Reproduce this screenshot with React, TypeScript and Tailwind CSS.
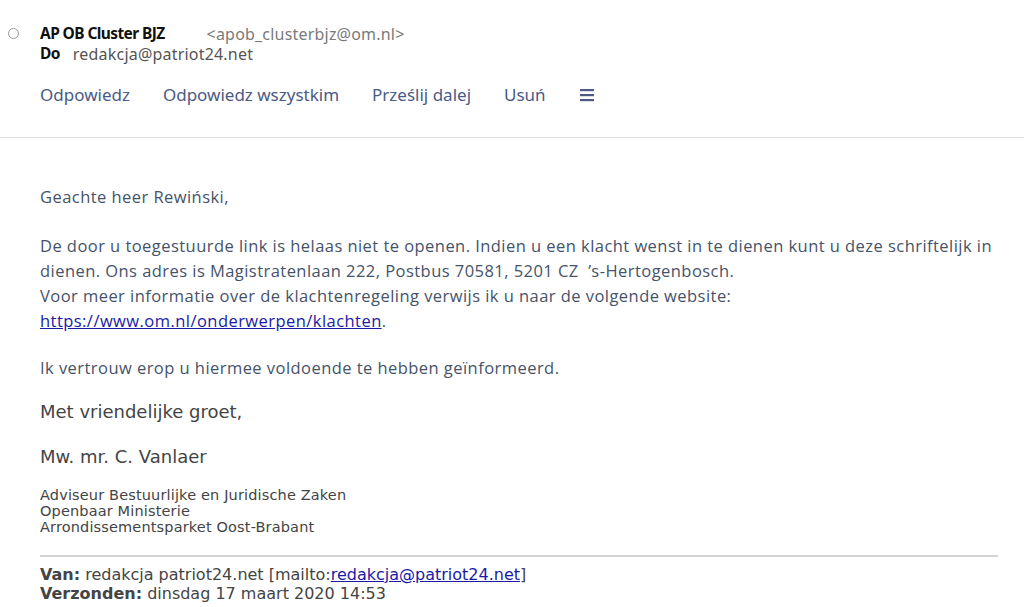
import React from 'react';

const body = "font-['Open_Sans',sans-serif] text-[16.5px] tracking-[0.45px] text-[#45536a] leading-[25px] whitespace-nowrap";
const sig = "font-['DejaVu_Sans',sans-serif] text-[#444]";

export default function App() {
  return (
    <div className="w-[1024px] h-[607px] bg-white overflow-hidden">
      <header className="border-b border-[#e3e3e3] pt-[23px] pb-[29px] font-['Noto_Sans',sans-serif]">
        <div className="flex items-center h-[21px]">
          <span className="ml-[8px] w-[11px] h-[11px] rounded-full border border-[#9a9a9a]" />
          <span className="ml-[21px] text-[15.5px] tracking-[-0.6px] font-bold text-[#111]">AP OB Cluster BJZ</span>
          <span className="ml-[42px] text-[16px] tracking-[0.2px] text-[#7a7a7a]">&lt;apob_clusterbjz@om.nl&gt;</span>
        </div>
        <div className="flex items-center h-[20px] pl-[40px]">
          <span className="text-[15.5px] tracking-[-0.6px] font-bold text-[#111]">Do</span>
          <span className="ml-[13px] text-[16px] tracking-[0.2px] text-[#555]">redakcja@patriot24.net</span>
        </div>
        <nav className="flex items-center gap-[33px] pl-[40px] mt-[18px] text-[17px] text-[#4b5a86]">
          <span>Odpowiedz</span>
          <span>Odpowiedz wszystkim</span>
          <span>Prześlij dalej</span>
          <span>Usuń</span>
          <svg width="16" height="14" viewBox="0 0 16 14">
            <rect x="1" y="1" width="14" height="2.2" fill="#4b5a86" />
            <rect x="1" y="6" width="14" height="2.2" fill="#4b5a86" />
            <rect x="1" y="11" width="14" height="2.2" fill="#4b5a86" />
          </svg>
        </nav>
      </header>

      <main className="pl-[40px] pr-[24px] pt-[46px]">
        <p className={body}>Geachte heer Rewiński,</p>
        <p className={`${body} mt-[24px]`}>
          De door u toegestuurde link is helaas niet te openen. Indien u een klacht wenst in te dienen kunt u deze schriftelijk in
          <br />
          dienen. Ons adres is Magistratenlaan 222, Postbus 70581, 5201 CZ &nbsp;’s-Hertogenbosch.
          <br />
          Voor meer informatie over de klachtenregeling verwijs ik u naar de volgende website:
          <br />
          <a className="text-[#1a1aa6] underline">https://www.om.nl/onderwerpen/klachten</a>.
        </p>
        <p className={`${body} mt-[22px]`}>Ik vertrouw erop u hiermee voldoende te hebben geïnformeerd.</p>
        <p className={`${sig} text-[18px] leading-[24px] mt-[20px]`}>Met vriendelijke groet,</p>
        <p className={`${sig} text-[18px] leading-[24px] mt-[21px]`}>Mw. mr. C. Vanlaer</p>
        <div className={`${sig} text-[14.5px] tracking-[0.15px] leading-[16px] mt-[18px] text-[#222]`}>
          <p>Adviseur Bestuurlijke en Juridische Zaken</p>
          <p>Openbaar Ministerie</p>
          <p>Arrondissementsparket Oost-Brabant</p>
        </div>
        <div className="mt-[20px] border-t-2 border-[#d4d4d4] w-[958px]" />
        <div className={`${sig} text-[16px] leading-[19px] mt-[8px] text-[#333]`}>
          <p>
            <b>Van:</b> redakcja patriot24.net [mailto:<a className="text-[#1a1aa6] underline">redakcja@patriot24.net</a>]
          </p>
          <p>
            <b>Verzonden:</b> dinsdag 17 maart 2020 14:53
          </p>
        </div>
      </main>
    </div>
  );
}
